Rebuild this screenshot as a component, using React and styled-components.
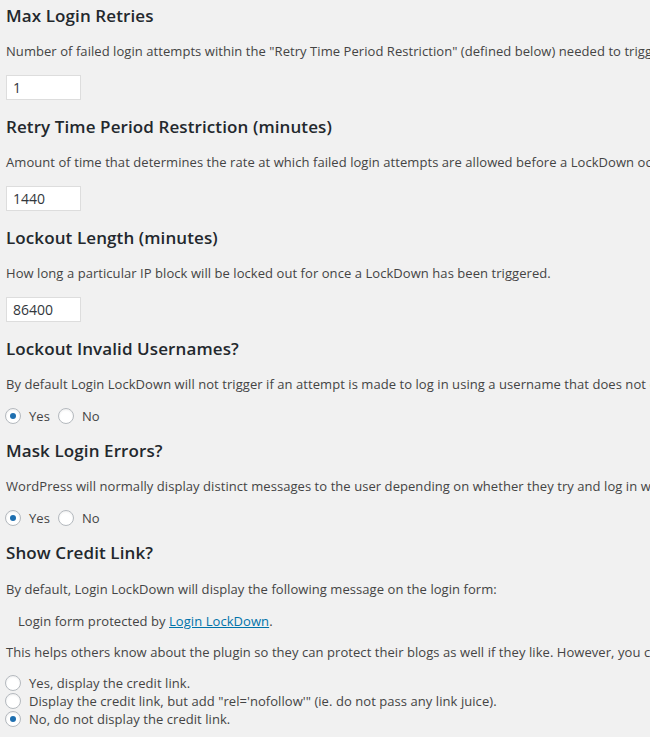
import styled, { createGlobalStyle } from 'styled-components'

const GlobalStyle = createGlobalStyle`
  html, body {
    margin: 0;
    background: #f1f1f1;
  }
  body {
    font-family: 'Open Sans', 'Liberation Sans', sans-serif;
    font-size: 13px;
    letter-spacing: 0.06px;
    color: #444;
    overflow: hidden;
  }
`

const Page = styled.div`
  padding: 4px 0 0 6px;
  white-space: nowrap;
`
const Section = styled.section`
  display: flex;
  flex-direction: column;
`
const Heading = styled.h3`
  margin: 0;
  font-size: 17px;
  line-height: 24px;
  font-weight: 600;
  letter-spacing: 0.1px;
  color: #23282d;
`
const Desc = styled.p`
  margin: ${props => props.top || 11}px 0 0;
  line-height: 24px;
  padding-left: ${props => (props.indent ? '12px' : '0')};
`
const Link = styled.a`
  color: #0073aa;
  text-decoration: underline;
`
const Input = styled.input`
  box-sizing: border-box;
  width: 75px;
  height: 25px;
  margin: 12px 0 15px;
  padding: 2px 6px;
  border: 1px solid #ddd;
  background: #fff;
  font: inherit;
  font-size: 14px;
  color: #32373c;
  outline: none;
`
const RadioRow = styled.div`
  display: flex;
  align-items: center;
  margin: 11px 0 14px;
  gap: 9px;
`
const RadioList = styled.div`
  display: flex;
  flex-direction: column;
  margin-top: 10px;
`
const Option = styled.label`
  display: flex;
  align-items: center;
  height: 18px;
  gap: 8px;
  margin-left: -1px;
`
const Circle = styled.span`
  box-sizing: border-box;
  width: 16px;
  height: 16px;
  border-radius: 50%;
  border: 1px solid #b4b9be;
  background: #fff;
  box-shadow: inset 0 1px 2px rgba(0, 0, 0, 0.07);
  display: flex;
  align-items: center;
  justify-content: center;

  &::after {
    content: '';
    width: 6px;
    height: 6px;
    border-radius: 50%;
    background: ${props => (props.checked ? '#1e6fb0' : 'transparent')};
  }
`

const Radio = ({ checked, children }) => (
  <Option>
    <Circle checked={checked} />
    {children}
  </Option>
)

const App = () => {
  return (
    <Page>
      <GlobalStyle />
      <Section>
        <Heading>Max Login Retries</Heading>
        <Desc>
          Number of failed login attempts within the "Retry Time Period
          Restriction" (defined below) needed to trigger a LockDown.
        </Desc>
        <Input defaultValue='1' />
      </Section>
      <Section>
        <Heading>Retry Time Period Restriction (minutes)</Heading>
        <Desc>
          Amount of time that determines the rate at which failed login
          attempts are allowed before a LockDown occurs.
        </Desc>
        <Input defaultValue='1440' />
      </Section>
      <Section>
        <Heading>Lockout Length (minutes)</Heading>
        <Desc>
          How long a particular IP block will be locked out for once a
          LockDown has been triggered.
        </Desc>
        <Input defaultValue='86400' />
      </Section>
      <Section>
        <Heading>Lockout Invalid Usernames?</Heading>
        <Desc>
          By default Login LockDown will not trigger if an attempt is made to
          log in using a username that does not exist.
        </Desc>
        <RadioRow>
          <Radio checked>Yes</Radio>
          <Radio>No</Radio>
        </RadioRow>
      </Section>
      <Section>
        <Heading>Mask Login Errors?</Heading>
        <Desc>
          WordPress will normally display distinct messages to the user
          depending on whether they try and log in with an invalid username.
        </Desc>
        <RadioRow>
          <Radio checked>Yes</Radio>
          <Radio>No</Radio>
        </RadioRow>
      </Section>
      <Section>
        <Heading>Show Credit Link?</Heading>
        <Desc top={12}>
          By default, Login LockDown will display the following message on the
          login form:
        </Desc>
        <Desc indent top={8}>
          Login form protected by <Link href='#'>Login LockDown</Link>.
        </Desc>
        <Desc top={7}>
          This helps others know about the plugin so they can protect their
          blogs as well if they like. However, you can disable this message.
        </Desc>
        <RadioList>
          <Radio>Yes, display the credit link.</Radio>
          <Radio>
            Display the credit link, but add "rel='nofollow'" (ie. do not pass
            any link juice).
          </Radio>
          <Radio checked>No, do not display the credit link.</Radio>
        </RadioList>
      </Section>
    </Page>
  )
}

export default App
